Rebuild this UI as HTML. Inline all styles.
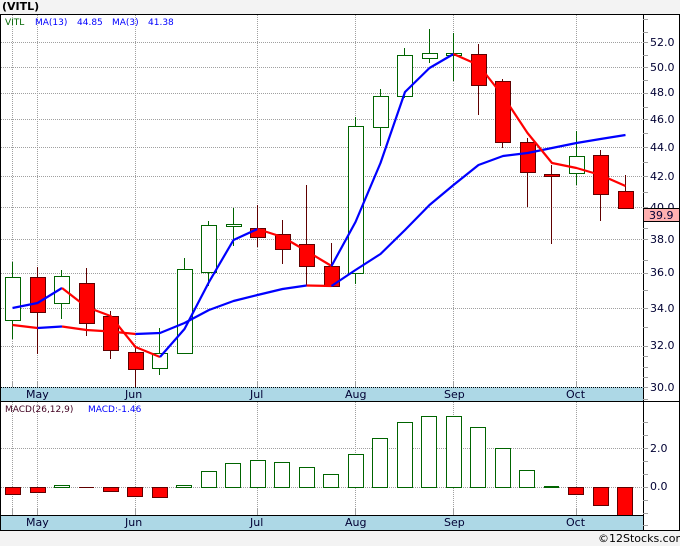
<!DOCTYPE html>
<html><head><meta charset="utf-8"><style>
html,body{margin:0;padding:0;background:#f3f3f3;width:680px;height:546px;overflow:hidden}
svg{display:block}
text{font-family:"DejaVu Sans","Liberation Sans",sans-serif;fill:#000033}
.a{font-size:11px}
.s{font-size:9px}
.g{stroke:#a0a0a0;stroke-width:1;stroke-dasharray:1 1;fill:none}
.t{stroke:#a0a0a0;stroke-width:1;fill:none}
.u{stroke:#006400;stroke-width:1;fill:#fff}
.d{stroke:#600000;stroke-width:1;fill:#f00}
.uw{stroke:#006400;stroke-width:1}
.dw{stroke:#600000;stroke-width:1}
.mb{stroke:#0000ff;stroke-width:2.2;fill:none;stroke-linejoin:round}
.mr{stroke:#ff0000;stroke-width:2.2;fill:none;stroke-linejoin:round}
</style></head><body>
<svg width="680" height="546" viewBox="0 0 680 546" xmlns="http://www.w3.org/2000/svg">
<rect x="0" y="0" width="680" height="546" fill="#f3f3f3"/>
<rect x="0" y="14" width="680" height="517" fill="#fff"/>
<text x="2" y="10" style="font-size:11px;font-weight:bold;fill:#000">(VITL)</text>

<g shape-rendering="crispEdges">
<path class="g" d="M1 42.5H643M1 67.5H643M1 93.5H643M1 119.5H643M1 147.5H643M1 176.5H643M1 207.5H643M1 239.5H643M1 273.5H643M1 308.5H643M1 346.5H643"/>
<path class="g" d="M12.5 15V387M37.5 15V387M135.5 15V387M257.5 15V387M355.5 15V387M453.5 15V387M576.5 15V387"/>
<path class="g" d="M1 448.5H643M1 487.5H643"/>
<path class="g" d="M12.5 402V515M37.5 402V515M135.5 402V515M257.5 402V515M355.5 402V515M453.5 402V515M576.5 402V515"/>
<path class="t" d="M12.5 382V387M37.5 382V387M135.5 382V387M257.5 382V387M355.5 382V387M453.5 382V387M576.5 382V387M12.5 509V515M37.5 509V515M135.5 509V515M257.5 509V515M355.5 509V515M453.5 509V515M576.5 509V515"/>

<!-- candles -->
<path class="uw" d="M12.5 262V339"/><rect class="u" x="5.5" y="277.5" width="15" height="43"/>
<path class="dw" d="M37.5 267V354"/><rect class="d" x="30.5" y="277.5" width="15" height="35"/>
<path class="uw" d="M61.5 270V319"/><rect class="u" x="54.5" y="276.5" width="15" height="27"/>
<path class="dw" d="M86.5 268V336"/><rect class="d" x="79.5" y="283.5" width="15" height="40"/>
<path class="dw" d="M110.5 311V359"/><rect class="d" x="103.5" y="316.5" width="15" height="34"/>
<path class="dw" d="M135.5 347V387"/><rect class="d" x="128.5" y="352.5" width="15" height="17"/>
<path class="uw" d="M159.5 328V375"/><rect class="u" x="152.5" y="353.5" width="15" height="15"/>
<path class="uw" d="M184.5 258V353"/><rect class="u" x="177.5" y="269.5" width="15" height="84"/>
<path class="uw" d="M208.5 221V286"/><rect class="u" x="201.5" y="225.5" width="15" height="47"/>
<path class="uw" d="M233.5 208V246"/><rect class="u" x="226.5" y="224.5" width="15" height="2"/>
<path class="dw" d="M257.5 205V247"/><rect class="d" x="250.5" y="228.5" width="15" height="9"/>
<path class="dw" d="M282.5 220V264"/><rect class="d" x="275.5" y="234.5" width="15" height="15"/>
<path class="dw" d="M306.5 185V286"/><rect class="d" x="299.5" y="244.5" width="15" height="22"/>
<path class="dw" d="M331.5 243V287"/><rect class="d" x="324.5" y="266.5" width="15" height="20"/>
<path class="uw" d="M355.5 117V284"/><rect class="u" x="348.5" y="126.5" width="15" height="147"/>
<path class="uw" d="M380.5 89V146"/><rect class="u" x="373.5" y="96.5" width="15" height="31"/>
<path class="uw" d="M404.5 48V98"/><rect class="u" x="397.5" y="55.5" width="15" height="41"/>
<path class="uw" d="M429.5 29V63"/><rect class="u" x="422.5" y="53.5" width="15" height="5"/>
<path class="uw" d="M453.5 33V81"/><rect class="u" x="446.5" y="53.5" width="15" height="2"/>
<path class="dw" d="M478.5 44V115"/><rect class="d" x="471.5" y="54.5" width="15" height="31"/>
<path class="dw" d="M502.5 79V148"/><rect class="d" x="495.5" y="81.5" width="15" height="61"/>
<path class="dw" d="M527.5 138V207"/><rect class="d" x="520.5" y="142.5" width="15" height="30"/>
<path class="dw" d="M551.5 165V244"/><rect class="d" x="544.5" y="174.5" width="15" height="2"/>
<path class="uw" d="M576.5 131V185"/><rect class="u" x="569.5" y="156.5" width="15" height="17"/>
<path class="dw" d="M600.5 150V221"/><rect class="d" x="593.5" y="155.5" width="15" height="39"/>
<path class="dw" d="M625.5 175V209"/><rect class="d" x="618.5" y="191.5" width="15" height="17"/>
</g>

<!-- MA(13) -->
<path class="mr" d="M12.5 325L37.5 328"/>
<path class="mb" d="M37.5 328L62 326.5"/>
<path class="mr" d="M62 326.5L86.5 330L110.5 331.5L135.5 334"/>
<path class="mb" d="M135.5 334L160 333L184.5 323L209 310L233.5 301L257.5 295L282.5 289L306.5 285.5"/>
<path class="mr" d="M306.5 285.5L331.5 286"/>
<path class="mb" d="M331.5 286L355.5 270L380.5 254L405 230L429.5 205L453.5 185L478.5 165L503 156L527.5 153L552 148L576.5 143L600.5 139L625.5 135"/>
<!-- MA(3) -->
<path class="mb" d="M12.5 308L37.5 303L62 288"/>
<path class="mr" d="M62 288L86.5 307L110.5 316L135.5 347L160 357"/>
<path class="mb" d="M160 357L184.5 329L209 282L233.5 240L257.5 229"/>
<path class="mr" d="M257.5 229L282.5 237L306.5 251L331.5 266"/>
<path class="mb" d="M331.5 266L355.5 222L380.5 163L405 92L429.5 68L453.5 54"/>
<path class="mr" d="M453.5 54L478.5 65L503 96L527.5 133L552 163L576.5 168L600.5 175L625.5 186"/>

<g shape-rendering="crispEdges">
<!-- MACD bars -->
<rect class="d" x="5.5" y="487.5" width="15" height="7"/>
<rect class="d" x="30.5" y="487.5" width="15" height="5"/>
<rect class="u" x="54.5" y="485.5" width="15" height="2"/>
<rect x="79" y="487" width="15" height="1" fill="#600000"/>
<rect class="d" x="103.5" y="487.5" width="15" height="4"/>
<rect class="d" x="127.5" y="487.5" width="15" height="9"/>
<rect class="d" x="152.5" y="487.5" width="15" height="10"/>
<rect class="u" x="176.5" y="485.5" width="15" height="2"/>
<rect class="u" x="201.5" y="471.5" width="15" height="16"/>
<rect class="u" x="225.5" y="463.5" width="15" height="24"/>
<rect class="u" x="250.5" y="460.5" width="15" height="27"/>
<rect class="u" x="274.5" y="462.5" width="15" height="25"/>
<rect class="u" x="299.5" y="467.5" width="15" height="20"/>
<rect class="u" x="323.5" y="474.5" width="15" height="13"/>
<rect class="u" x="348.5" y="454.5" width="15" height="33"/>
<rect class="u" x="372.5" y="438.5" width="15" height="49"/>
<rect class="u" x="397.5" y="422.5" width="15" height="65"/>
<rect class="u" x="421.5" y="416.5" width="15" height="71"/>
<rect class="u" x="446.5" y="416.5" width="15" height="71"/>
<rect class="u" x="470.5" y="427.5" width="15" height="60"/>
<rect class="u" x="495.5" y="448.5" width="15" height="39"/>
<rect class="u" x="519.5" y="470.5" width="15" height="17"/>
<rect x="544" y="486" width="15" height="2" fill="#006400"/>
<rect class="d" x="568.5" y="487.5" width="15" height="7"/>
<rect class="d" x="593.5" y="487.5" width="15" height="18"/>
<rect class="d" x="617.5" y="487.5" width="15" height="28"/>

<!-- bands -->
<rect x="0" y="387" width="643" height="14" fill="#add8e6"/>
<rect x="0" y="515" width="643" height="15" fill="#add8e6"/>
<path d="M1 387.5H643" stroke="#000" stroke-width="1" stroke-dasharray="1 1" fill="none"/>
<path d="M0 14.5H680M0 401.5H680M0 515.5H643M0 530.5H680" stroke="#000" stroke-width="1" fill="none"/>
<path d="M0.5 14V531M643.5 14V531M679.5 14V531" stroke="#000" stroke-width="1" fill="none"/>
<path class="t" d="M643 19.5H648M643 32.5H648M643 42.5H648M643 55.5H648M643 67.5H648M643 80.5H648M643 93.5H648M643 107.5H648M643 119.5H648M643 133.5H648M643 147.5H648M643 162.5H648M643 176.5H648M643 192.5H648M643 207.5H648M643 228.5H648M643 239.5H648M643 260.5H648M643 273.5H648M643 290.5H648M643 308.5H648M643 327.5H648M643 346.5H648M643 356.5H648M643 367.5H648M643 377.5H648M643 387.5H648M643 399.5H648M643 422.5H648M643 435.5H648M643 448.5H648M643 461.5H648M643 474.5H648M643 487.5H648M643 500.5H648M643 513.5H648M643 525.5H648"/>
</g>

<!-- legends -->
<text class="s" x="5" y="25" style="fill:#006400">VITL</text>
<text class="s" x="35" y="25" style="fill:#0000ff">MA(13)</text>
<text class="s" x="77" y="25" style="fill:#0000ff">44.85</text>
<text class="s" x="112" y="25" style="fill:#0000ff">MA(3)</text>
<text class="s" x="148" y="25" style="fill:#0000ff">41.38</text>
<text class="s" x="5" y="412" style="fill:#400020">MACD(26,12,9)</text>
<text class="s" x="88" y="412" style="fill:#0000ff">MACD:-1.46</text>

<!-- axis labels -->
<text class="a" x="650" y="46">52.0</text>
<text class="a" x="650" y="71">50.0</text>
<text class="a" x="650" y="96">48.0</text>
<text class="a" x="650" y="123">46.0</text>
<text class="a" x="650" y="151">44.0</text>
<text class="a" x="650" y="180">42.0</text>
<text class="a" x="650" y="211">40.0</text>
<text class="a" x="650" y="243">38.0</text>
<text class="a" x="650" y="276">36.0</text>
<text class="a" x="650" y="312">34.0</text>
<text class="a" x="650" y="349">32.0</text>
<text class="a" x="650" y="391">30.0</text>
<text class="a" x="650" y="452">2.0</text>
<text class="a" x="650" y="490">0.0</text>

<rect x="643.5" y="208.5" width="36" height="13" fill="#ffb0b0" stroke="#000" shape-rendering="crispEdges"/>
<text class="a" x="649" y="219">39.9</text>

<text class="a" x="26" y="398">May</text>
<text class="a" x="125" y="398">Jun</text>
<text class="a" x="250" y="398">Jul</text>
<text class="a" x="345" y="398">Aug</text>
<text class="a" x="444" y="398">Sep</text>
<text class="a" x="566" y="398">Oct</text>
<text class="a" x="26" y="526">May</text>
<text class="a" x="125" y="526">Jun</text>
<text class="a" x="250" y="526">Jul</text>
<text class="a" x="345" y="526">Aug</text>
<text class="a" x="444" y="526">Sep</text>
<text class="a" x="566" y="526">Oct</text>

<text x="598" y="542" style="font-size:11px;fill:#000">©12Stocks.com</text>
</svg>
</body></html>
